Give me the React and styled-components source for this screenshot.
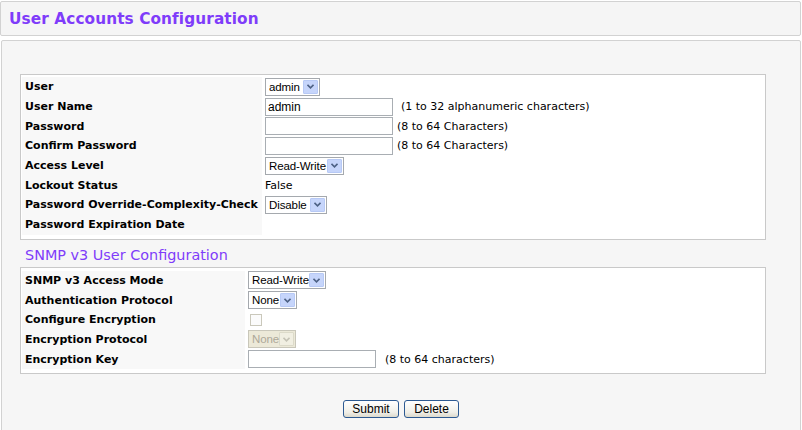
import styled, { createGlobalStyle } from "styled-components";

const GlobalStyle = createGlobalStyle`
  html, body {
    margin: 0;
    padding: 0;
    background: #ffffff;
  }
  body {
    font-family: "DejaVu Sans", Verdana, sans-serif;
    font-size: 11px;
    color: #000;
  }
`;

const purple = "#7f3cfa";

const Page = styled.div`
  width: 802px;
  height: 430px;
  overflow: hidden;
  box-sizing: border-box;
  padding: 1px 1px 0 0;
`;

const TitleBar = styled.div`
  height: 35px;
  box-sizing: border-box;
  border: 1px solid #d2d2d2;
  border-radius: 2px;
  background: #f5f5f5;
  display: flex;
  align-items: center;
  padding: 1px 0 0 8px;
`;

const Title = styled.h1`
  margin: 0;
  font-size: 15.3px;
  font-weight: bold;
  color: ${purple};
  letter-spacing: 0.1px;
`;

const Panel = styled.div`
  margin: 4px 0 0 1px;
  height: 400px;
  box-sizing: border-box;
  border: 1px solid #d2d2d2;
  border-radius: 2px;
  background: #f6f6f6;
  padding: 33px 34px 0 18px;
`;

const Table = styled.div`
  border: 1px solid #c9c9c9;
  background: #ffffff;
  padding: ${(p) => p.$pad};
`;

const Row = styled.div`
  display: grid;
  grid-template-columns: ${(p) => p.$label}px 1fr;
  height: ${(p) => p.$h || 19.7}px;
`;

const Label = styled.div`
  background: #f8f8f8;
  font-weight: bold;
  display: flex;
  align-items: center;
  padding-left: 3px;
  white-space: nowrap;
`;

const Value = styled.div`
  display: flex;
  align-items: center;
  padding-left: 3px;
  white-space: nowrap;
`;

const Hint = styled.span`
  margin-left: ${(p) => p.$gap || 4}px;
`;

const TextInput = styled.div`
  width: ${(p) => p.$w}px;
  height: 18px;
  box-sizing: border-box;
  border: 1px solid #a9aeb3;
  background: #fff;
  font-family: "Liberation Sans", Arial, sans-serif;
  font-size: 12px;
  line-height: 16px;
  padding-left: 2px;
`;

const SelectBox = styled.div`
  width: ${(p) => p.$w}px;
  height: 18px;
  box-sizing: border-box;
  border: 1px solid ${(p) => (p.$disabled ? "#c9c7ba" : "#a5a9ae")};
  background: ${(p) => (p.$disabled ? "#ece9d8" : "#fff")};
  color: ${(p) => (p.$disabled ? "#aca899" : "#000")};
  display: flex;
  align-items: center;
  justify-content: space-between;
  font-family: "Liberation Sans", Arial, sans-serif;
  font-size: 11.5px;
  letter-spacing: -0.1px;
  padding: 0 1px 0 3px;
`;

const Arrow = styled.span`
  width: 15px;
  height: 14px;
  box-sizing: border-box;
  border: 1px solid ${(p) => (p.$disabled ? "#dcdac9" : "#b7c9f5")};
  background: ${(p) => (p.$disabled ? "#f1efe2" : "#c6d5fb")};
  border-radius: 1px;
  display: flex;
  align-items: center;
  justify-content: center;
`;

const Check = styled.span`
  width: 12px;
  height: 12px;
  margin-left: 2px;
  box-sizing: border-box;
  border: 1px solid #cac8bb;
  background: #fbfbfb;
`;

const Heading = styled.h2`
  margin: 0;
  height: 27px;
  display: flex;
  align-items: center;
  padding: 3px 0 0 5px;
  box-sizing: border-box;
  font-size: 14.4px;
  font-weight: normal;
  color: ${purple};
`;

const Buttons = styled.div`
  display: flex;
  justify-content: center;
  gap: 5px;
  padding-top: 26px;
  margin-left: -18px;
  margin-right: -34px;
`;

const Button = styled.button`
  width: ${(p) => p.$w}px;
  height: 18px;
  box-sizing: border-box;
  border: 1px solid #2d5a92;
  border-radius: 3px;
  background: linear-gradient(#ffffff, #f0efe8 70%, #dcd9cc);
  font-family: "Liberation Sans", Arial, sans-serif;
  font-size: 12px;
  padding: 0;
  color: #000;
`;

function Chevron({ disabled }) {
  return (
    <svg width="7" height="5" viewBox="0 0 7 5">
      <path
        d="M0.5 0.8 L3.5 3.8 L6.5 0.8"
        fill="none"
        stroke={disabled ? "#c5c3b6" : "#4d6185"}
        strokeWidth="1.6"
      />
    </svg>
  );
}

function Select({ value, w, disabled }) {
  return (
    <SelectBox $w={w} $disabled={disabled}>
      <span>{value}</span>
      <Arrow $disabled={disabled}>
        <Chevron disabled={disabled} />
      </Arrow>
    </SelectBox>
  );
}

export default function App() {
  const L1 = 240;
  const L2 = 223;
  return (
    <>
      <GlobalStyle />
      <Page>
        <TitleBar>
          <Title>User Accounts Configuration</Title>
        </TitleBar>
        <Panel>
          <Table $pad="2px 0 4px 1px">
            <Row $label={L1}>
              <Label>User</Label>
              <Value><Select value="admin" w={55} /></Value>
            </Row>
            <Row $label={L1}>
              <Label>User Name</Label>
              <Value>
                <TextInput $w={128}>admin</TextInput>
                <Hint $gap={8}>(1 to 32 alphanumeric characters)</Hint>
              </Value>
            </Row>
            <Row $label={L1}>
              <Label>Password</Label>
              <Value>
                <TextInput $w={128} />
                <Hint>(8 to 64 Characters)</Hint>
              </Value>
            </Row>
            <Row $label={L1}>
              <Label>Confirm Password</Label>
              <Value>
                <TextInput $w={128} />
                <Hint>(8 to 64 Characters)</Hint>
              </Value>
            </Row>
            <Row $label={L1}>
              <Label>Access Level</Label>
              <Value><Select value="Read-Write" w={79} /></Value>
            </Row>
            <Row $label={L1}>
              <Label>Lockout Status</Label>
              <Value>False</Value>
            </Row>
            <Row $label={L1}>
              <Label>Password Override-Complexity-Check</Label>
              <Value><Select value="Disable" w={62} /></Value>
            </Row>
            <Row $label={L1}>
              <Label>Password Expiration Date</Label>
              <Value />
            </Row>
          </Table>

          <Heading>SNMP v3 User Configuration</Heading>

          <Table $pad="3px 0 4px 1px">
            <Row $label={L2}>
              <Label>SNMP v3 Access Mode</Label>
              <Value><Select value="Read-Write" w={78} /></Value>
            </Row>
            <Row $label={L2}>
              <Label>Authentication Protocol</Label>
              <Value><Select value="None" w={49} /></Value>
            </Row>
            <Row $label={L2}>
              <Label>Configure Encryption</Label>
              <Value><Check /></Value>
            </Row>
            <Row $label={L2}>
              <Label>Encryption Protocol</Label>
              <Value><Select value="None" w={48} disabled /></Value>
            </Row>
            <Row $label={L2}>
              <Label>Encryption Key</Label>
              <Value>
                <TextInput $w={128} />
                <Hint $gap={9}>(8 to 64 characters)</Hint>
              </Value>
            </Row>
          </Table>

          <Buttons>
            <Button $w={56}>Submit</Button>
            <Button $w={55}>Delete</Button>
          </Buttons>
        </Panel>
      </Page>
    </>
  );
}
